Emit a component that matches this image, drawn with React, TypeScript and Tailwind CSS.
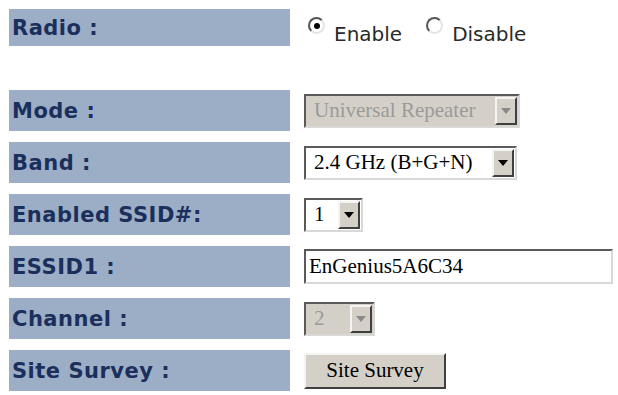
import React from 'react';

const labelCls =
  "w-[281px] shrink-0 bg-[#9cadc6] flex items-center pl-[3px] pt-[3px] text-[21px] tracking-[0.5px] font-bold text-[#1b2f5c] [font-family:'DejaVu_Sans',Verdana,sans-serif]";

const serif = "[font-family:'Liberation_Serif','Times_New_Roman',serif] text-[21px]";

function Arrow({ disabled }: { disabled?: boolean }) {
  return (
    <span className="w-[22px] self-stretch shrink-0 bg-[#d4d0c8] border-t-2 border-l-2 border-t-[#f4f4f4] border-l-[#f4f4f4] border-b-2 border-r-2 border-b-[#404040] border-r-[#404040] flex items-center justify-center">
      <svg width="10" height="6" viewBox="0 0 10 6">
        <path d="M0 0h10L5 6z" fill={disabled ? '#8a8a8a' : '#000'} />
      </svg>
    </span>
  );
}

function Select({
  value,
  width,
  disabled,
}: {
  value: string;
  width: string;
  disabled?: boolean;
}) {
  return (
    <div
      className={`${width} h-[34px] flex border-t-2 border-l-2 border-t-[#5a5a5a] border-l-[#5a5a5a] border-b-2 border-r-2 border-b-[#d8d8d8] border-r-[#d8d8d8] p-[1px] ${
        disabled ? 'bg-[#d4d0c8]' : 'bg-white'
      }`}
    >
      <span
        className={`flex-1 flex items-center pl-[7px] whitespace-nowrap overflow-hidden ${serif} ${
          disabled ? 'text-[#9a9a9a]' : 'text-black'
        }`}
      >
        {value}
      </span>
      <Arrow disabled={disabled} />
    </div>
  );
}

function Radio({ checked, label }: { checked?: boolean; label: string }) {
  return (
    <label className="flex items-start gap-[9px]">
      <span className="mt-[9px] w-[17px] h-[17px] rounded-full bg-white border-2 border-t-[#555] border-l-[#555] border-b-[#e4e4e4] border-r-[#e4e4e4] flex items-center justify-center">
        {checked && <span className="w-[6px] h-[6px] rounded-full bg-black" />}
      </span>
      <span className="mt-[11px] text-[20px] text-[#2a2a2a] [font-family:'DejaVu_Sans',Verdana,sans-serif]">
        {label}
      </span>
    </label>
  );
}

function Row({ label, children }: { label: string; children: React.ReactNode }) {
  return (
    <div className="flex h-[41px]">
      <div className={labelCls}>{label}</div>
      <div className="pl-[14px] flex items-center">{children}</div>
    </div>
  );
}

export default function App() {
  return (
    <div className="w-[618px] h-[395px] bg-white pl-[9px] pt-[9px] overflow-hidden">
      <div className="flex h-[37px]">
        <div className={labelCls}>Radio :</div>
        <div className="pl-[18px] flex items-start gap-[24px] -mt-[1px]">
          <Radio checked label="Enable" />
          <Radio label="Disable" />
        </div>
      </div>

      <div className="mt-[44px] flex flex-col gap-[11px]">
        <Row label="Mode :">
          <Select value="Universal Repeater" width="w-[216px]" disabled />
        </Row>
        <Row label="Band :">
          <Select value="2.4 GHz (B+G+N)" width="w-[213px]" />
        </Row>
        <Row label="Enabled SSID#:">
          <Select value="1" width="w-[59px]" />
        </Row>
        <Row label="ESSID1 :">
          <div className="w-[309px] h-[35px] flex items-center bg-white border-t-2 border-l-2 border-t-[#5a5a5a] border-l-[#5a5a5a] border-b-2 border-r-2 border-b-[#d8d8d8] border-r-[#d8d8d8] pl-[3px]">
            <span className={`${serif} text-black`}>EnGenius5A6C34</span>
          </div>
        </Row>
        <Row label="Channel :">
          <Select value="2" width="w-[71px]" disabled />
        </Row>
        <Row label="Site Survey :">
          <button className="w-[142px] h-[36px] bg-[#d4d0c8] border-t-2 border-l-2 border-t-[#f4f4f4] border-l-[#f4f4f4] border-b-2 border-r-2 border-b-[#404040] border-r-[#404040] flex items-center justify-center">
            <span className={`${serif} text-black`}>Site Survey</span>
          </button>
        </Row>
      </div>
    </div>
  );
}
